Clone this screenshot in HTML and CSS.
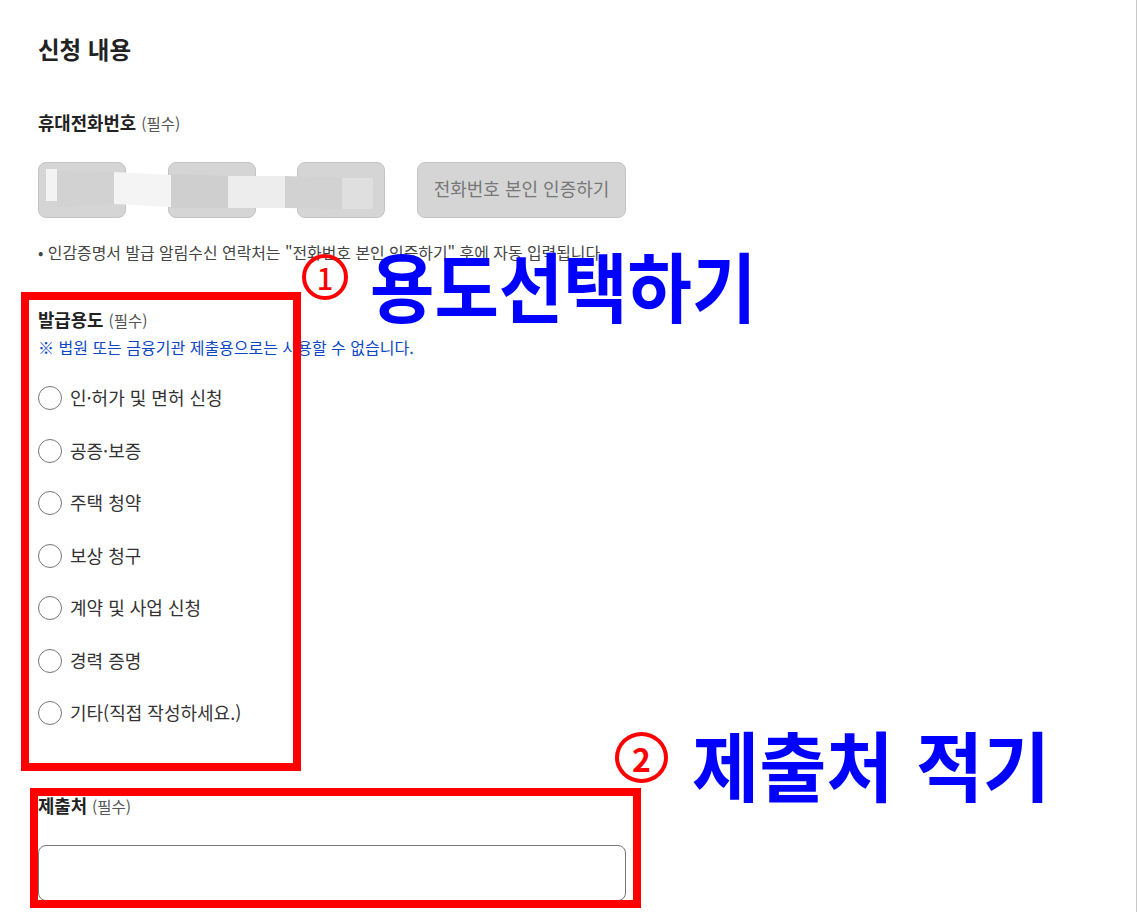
FILE: index.html
```html
<!DOCTYPE html>
<html lang="ko">
<head>
<meta charset="utf-8">
<title>신청 내용</title>
<link rel="stylesheet" href="styles.css">
</head>
<body>
<main class="page">
  <h1 class="title">신청 내용</h1>

  <section class="phone">
    <p class="label"><strong>휴대전화번호</strong> <span class="req">(필수)</span></p>
    <div class="phone-row">
      <input class="field-disabled" type="text" disabled>
      <input class="field-disabled" type="text" disabled>
      <input class="field-disabled" type="text" disabled>
      <button class="verify" type="button" disabled>전화번호 본인 인증하기</button>
    </div>
    <p class="note">• 인감증명서 발급 알림수신 연락처는 "전화번호 본인 인증하기" 후에 자동 입력됩니다.</p>
  </section>

  <section class="purpose">
    <p class="label"><strong>발급용도</strong> <span class="req">(필수)</span></p>
    <p class="warn">※ 법원 또는 금융기관 제출용으로는 사용할 수 없습니다.</p>
    <div class="options">
      <label class="option"><input type="radio" name="use"><span>인·허가 및 면허 신청</span></label>
      <label class="option"><input type="radio" name="use"><span>공증·보증</span></label>
      <label class="option"><input type="radio" name="use"><span>주택 청약</span></label>
      <label class="option"><input type="radio" name="use"><span>보상 청구</span></label>
      <label class="option"><input type="radio" name="use"><span>계약 및 사업 신청</span></label>
      <label class="option"><input type="radio" name="use"><span>경력 증명</span></label>
      <label class="option"><input type="radio" name="use"><span>기타(직접 작성하세요.)</span></label>
    </div>
  </section>

  <section class="submit">
    <p class="label"><strong>제출처</strong> <span class="req">(필수)</span></p>
    <input class="field" type="text">
  </section>
</main>

<svg class="redaction" width="340" height="50" viewBox="0 0 340 50" aria-hidden="true">
  <polygon points="0,7 11,7 11,39 0,39" fill="#f3f3f3"/>
  <polygon points="11,9 68,10 68,42 11,45" fill="#d2d2d2"/>
  <polygon points="68,10 125,13 125,45 68,42" fill="#f4f4f4"/>
  <polygon points="125,12 182,14 182,46 125,46" fill="#cfcfcf"/>
  <polygon points="182,14 239,14 239,46 182,46" fill="#ededed"/>
  <polygon points="239,14 296,16 296,47 239,46" fill="#d2d2d2"/>
  <polygon points="296,16 327,16 327,47 296,47" fill="#dfdfdf"/>
</svg>

<div class="mark mark-one"></div>
<div class="mark mark-two"></div>

<div class="callout callout-one"><span class="num">1</span><span class="callout-text">용도선택하기</span></div>
<div class="callout callout-two"><span class="num">2</span><span class="callout-text">제출처 적기</span></div>
</body>
</html>
```

FILE: styles.css
```css
* { box-sizing: border-box; }

html, body {
  margin: 0;
  height: 912px;
  overflow: hidden;
}

body {
  position: relative;
  background: #fff;
  color: #222;
  font-family: "Noto Sans CJK KR", "Noto Sans", sans-serif;
  border-right: 1px solid #c8c8c8;
}

p, h1 { margin: 0; }

.page {
  padding: 31px 0 0 38px;
  width: 626px;
}

.title {
  font-size: 23.5px;
  line-height: 36px;
  font-weight: 700;
  color: #222;
}

.phone { margin-top: 43px; }

.label {
  font-size: 17.8px;
  line-height: 24px;
  color: #222;
}

.label strong { font-weight: 700; }

.req {
  font-size: 15.5px;
  color: #555;
}

.phone-row {
  display: flex;
  margin-top: 27px;
  width: 588px;
}

.field-disabled {
  width: 88px;
  height: 56px;
  margin-right: 41.5px;
  border: 1px solid #c4c4c4;
  border-radius: 8px;
  background: #d5d5d5;
}

.field-disabled:nth-child(3) { margin-right: 32px; }

.verify {
  width: 209px;
  height: 56px;
  padding: 0 0 5px;
  border: 1px solid #c4c4c4;
  border-radius: 8px;
  background: #d5d5d5;
  color: #777;
  font: 400 18px "Noto Sans CJK KR", sans-serif;
}

.note {
  margin-top: 24px;
  font-size: 15.9px;
  line-height: 22px;
  color: #444;
  white-space: nowrap;
}

.purpose { margin-top: 43px; }

.warn {
  margin-top: 4px;
  font-size: 16px;
  line-height: 22px;
  color: #0b47c4;
  white-space: nowrap;
}

.options {
  display: flex;
  flex-direction: column;
  gap: 20.5px;
  margin-top: 24px;
}

.option {
  display: flex;
  align-items: center;
  gap: 8px;
  height: 32px;
  font-size: 18px;
  color: #333;
}

.option span { margin-top: -2px; }

.option input {
  appearance: none;
  flex: none;
  width: 24px;
  height: 24px;
  margin: 0;
  border: 1px solid #767676;
  border-radius: 50%;
  background: #fff;
}

.submit { margin-top: 64px; }

.field {
  display: block;
  width: 100%;
  height: 56px;
  margin-top: 27px;
  border: 1px solid #767676;
  border-radius: 8px;
  background: #fff;
}

.redaction {
  position: absolute;
  left: 46px;
  top: 162px;
}

.mark {
  position: absolute;
  border: 8px solid #f00;
}

.mark-one {
  left: 21px;
  top: 292px;
  width: 280px;
  height: 479px;
}

.mark-two {
  left: 30px;
  top: 788px;
  width: 611px;
  height: 120px;
}

.callout {
  position: absolute;
  display: flex;
  align-items: flex-start;
  white-space: nowrap;
}

.callout-one { left: 302px; top: 239px; gap: 22px; }
.callout-two { left: 615px; top: 717px; gap: 24px; }

.num {
  display: flex;
  align-items: center;
  justify-content: center;
  width: 46px;
  height: 46px;
  margin-top: 15px;
  border: 4px solid #f00;
  border-radius: 50%;
  color: #f00;
  font-size: 29px;
  font-weight: 500;
  line-height: 1;
}

.callout-two .num {
  width: 53px;
  height: 51px;
  font-size: 32px;
  font-weight: 700;
}

.callout-text {
  color: #00f;
  font-size: 70px;
  line-height: 92px;
  font-weight: 700;
  transform: scaleY(1.08);
}

.callout-two .callout-text {
  font-size: 73px;
  word-spacing: 2px;
  transform: scaleY(1.04);
}
```
